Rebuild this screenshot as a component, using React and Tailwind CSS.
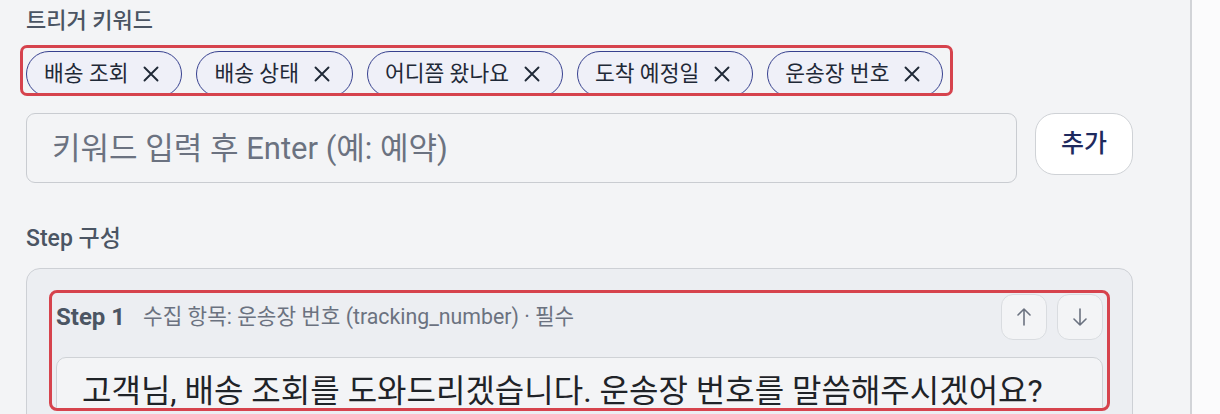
const keywords = ["배송 조회", "배송 상태", "어디쯤 왔나요", "도착 예정일", "운송장 번호"];

function Cross() {
  return (
    <svg width="16" height="16" viewBox="0 0 16 16" fill="none" stroke="#1f2937" strokeWidth="1.9" strokeLinecap="round">
      <path d="M1.5 1.5 L14.5 14.5 M14.5 1.5 L1.5 14.5" />
    </svg>
  );
}

function Arrow({ down }) {
  return (
    <svg width="14" height="18" viewBox="0 0 14 18" fill="none" stroke="#6b7280" strokeWidth="1.6" strokeLinecap="round" strokeLinejoin="round">
      {down ? <path d="M1 11 L7 17 L13 11 M7 17 V1" /> : <path d="M1 7 L7 1 L13 7 M7 1 V17" />}
    </svg>
  );
}

function Chip({ label }) {
  return (
    <span className="inline-flex h-[46px] shrink-0 items-center gap-[15px] rounded-full border-[1.5px] border-[#37418f] bg-[#eff0f8] pl-[17px] pr-[22px] text-[21.5px] leading-none text-[#1f2937]">
      {label}
      <Cross />
    </span>
  );
}

export default function App() {
  return (
    <div className="flex min-h-screen bg-[#fbfbfc] font-[Roboto,'Noto_Sans_CJK_KR',sans-serif]">
      <div className="h-[414px] w-[1192px] shrink-0 overflow-hidden border-r-2 border-[#d2d4d8] bg-[#f3f4f6] pl-[26px] pt-[6px]">
        <div className="text-[22px] font-medium leading-[30px] text-[#4b5563]">트리거 키워드</div>

        <div className="ml-[-6px] mt-[9px] inline-flex h-[51px] items-start gap-[14px] overflow-hidden rounded-[7px] border-[3px] border-[#d6434d] pl-[3px] pr-[7px] pt-[3px]">
          {keywords.map((k) => (
            <Chip key={k} label={k} />
          ))}
        </div>

        <div className="mt-[17px] flex items-start gap-[18px]">
          <input
            type="text"
            placeholder="키워드 입력 후 Enter (예: 예약)"
            className="h-[70px] w-[991px] rounded-[9px] border-[1.5px] border-[#c9ccd1] bg-transparent px-[25px] text-[31px] text-[#1f2937] outline-none placeholder:text-[#6b7280]"
          />
          <button className="h-[62px] w-[98px] rounded-[20px] border-[1.5px] border-[#cfd2d6] bg-white text-[25px] font-medium text-[#1e2a5e]">
            추가
          </button>
        </div>

        <div className="mt-[41px] text-[23px] font-medium leading-[30px] text-[#4b5563]">Step 구성</div>

        <div className="mt-[14px] w-[1107px] rounded-[14px] border-[1.5px] border-[#cdd0d5] bg-[#eceef2] px-[22px] pb-[20px] pt-[21px]">
          <div className="h-[121px] overflow-hidden rounded-[8px] border-[3px] border-[#d6434d] px-[4px] pt-[1px]">
            <div className="flex h-[46px] items-center justify-between">
              <div className="flex items-center gap-[18px]">
                <span className="text-[24px] font-bold text-[#4b5563]">Step 1</span>
                <span className="text-[21.3px] text-[#6b7280]">수집 항목: 운송장 번호 (tracking_number) · 필수</span>
              </div>
              <div className="flex gap-[10px]">
                <button className="flex h-[46px] w-[46px] items-center justify-center rounded-[12px] border-[1.5px] border-[#d9dce0] bg-[#f3f4f6]">
                  <Arrow />
                </button>
                <button className="flex h-[46px] w-[46px] items-center justify-center rounded-[12px] border-[1.5px] border-[#d9dce0] bg-[#f3f4f6]">
                  <Arrow down />
                </button>
              </div>
            </div>
            <div className="mt-[17px] h-[90px] rounded-[10px] border-[1.5px] border-[#cfd2d6] bg-[#f3f4f6] px-[25px] pt-[10px] text-[32px] leading-[46px] text-[#1f2328]">
              고객님, 배송 조회를 도와드리겠습니다. 운송장 번호를 말씀해주시겠어요?
            </div>
          </div>
        </div>
      </div>
      <div className="flex-1" />
    </div>
  );
}
